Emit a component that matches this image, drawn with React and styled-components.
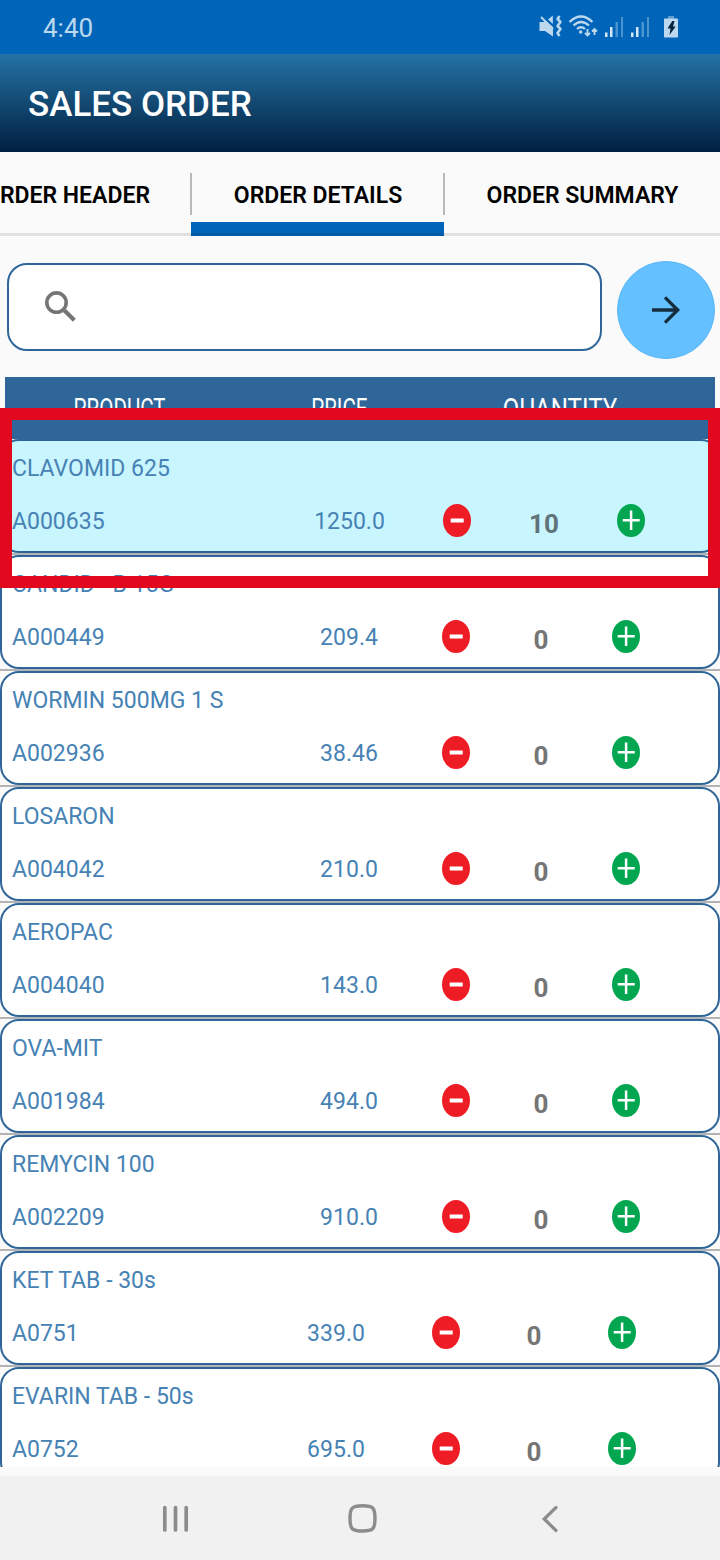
import React from "react";
import styled, { createGlobalStyle } from "styled-components";

const GlobalStyle = createGlobalStyle`
  * { box-sizing: border-box; }
  body { margin: 0; background: #fafafa; font-family: Roboto, "Liberation Sans", sans-serif; }
  svg { display: block; flex: none; }
`;

const Screen = styled.main`
  width: 720px;
  height: 1560px;
  display: flex;
  flex-direction: column;
  overflow: hidden;
  background: #fafafa;
`;

const StatusBar = styled.div`
  flex: none;
  height: 54px;
  padding: 2px 0 0 43px;
  display: flex;
  align-items: center;
  justify-content: space-between;
  background: #0065b8;
  color: #bcd8ee;
  font-size: 26px;
`;

const AppBar = styled.header`
  flex: none;
  height: 98px;
  padding: 2px 28px 0;
  display: flex;
  align-items: center;
  background: linear-gradient(#2573a5, #001f40);
`;

const Title = styled.h1`
  margin: 0;
  color: #fff;
  font-size: 35px;
  font-weight: 500;
  white-space: nowrap;
`;

const Tabs = styled.nav`
  flex: none;
  height: 84px;
  display: flex;
  overflow: hidden;
  background: linear-gradient(#e0e0e0, #e0e0e0) bottom / 100% 3px no-repeat;
`;

const Tab = styled.button`
  width: ${(p) => p.$width}px;
  flex: none;
  padding: 2px 41px 0 42px;
  border: 0;
  display: flex;
  align-items: center;
  justify-content: ${(p) => p.$align || "center"};
  background: ${(p) =>
    p.$active
      ? "linear-gradient(#005aa6, #005aa6) bottom / 100% 3px no-repeat, linear-gradient(#0065b8, #0065b8) bottom / 100% 14px no-repeat"
      : "none"};
  color: #000;
  font: 600 23px Roboto, sans-serif;
  white-space: nowrap;
`;

const TabDivider = styled.span`
  flex: none;
  width: 2px;
  height: 42px;
  margin: 21px -1px 0;
  background: #b9b9b9;
`;

const SearchRow = styled.div`
  flex: none;
  height: 141px;
  padding: 25px 5px 18px 7px;
  display: flex;
  align-items: center;
  gap: 15px;
`;

const SearchBox = styled.div`
  width: 595px;
  height: 88px;
  margin-top: -6px;
  padding: 0 35px 0;
  display: flex;
  align-items: center;
  border: 2px solid #2f6699;
  border-radius: 20px;
  background: #fff;
`;

const NextButton = styled.button`
  width: 98px;
  height: 98px;
  flex: none;
  padding: 0;
  border: 1px solid #58b7f8;
  border-radius: 50%;
  display: flex;
  align-items: center;
  justify-content: center;
  background: #64c0ff;
`;

const TableArea = styled.section`
  position: relative;
  flex: none;
  height: 1090px;
  overflow: hidden;
`;

const TableHead = styled.div`
  height: 62px;
  margin: 0 5px;
  padding-top: 2px;
  display: grid;
  grid-template-columns: 229px 211px 1fr;
  align-items: center;
  justify-items: center;
  background: #2f6699;
  color: #fff;
`;

const HeadLabel = styled.span`
  font-size: ${(p) => p.$size}px;
  margin-left: ${(p) => p.$shift || 0}px;
  line-height: 22px;
  overflow: hidden;
  transform: scaleX(${(p) => p.$squeeze});
  white-space: nowrap;
`;

const Item = styled.article`
  height: 114px;
  padding: 0 0 0 10px;
  border: 2px solid #2f6699;
  border-radius: 19px;
  background: ${(p) => (p.$selected ? "#c9f5ff" : "#fff")};
`;

const ItemSlot = styled.div`
  height: 116px;
  background: linear-gradient(#b3b3b3, #b3b3b3) bottom / 100% 2px no-repeat;
`;

const ItemName = styled.div`
  height: 54px;
  padding-top: 1px;
  line-height: 54px;
  color: #4682b4;
  font-size: 23px;
  white-space: pre;
`;

const ItemLine = styled.div`
  height: 52px;
  display: grid;
  grid-template-columns: ${(p) => p.$columns};
  align-items: center;
`;

const Code = styled.span`
  color: #4682b4;
  font-size: 23px;
`;

const Price = styled.span`
  color: #4682b4;
  font-size: 23px;
  text-align: center;
`;

const Quantity = styled.strong`
  padding-top: 5px;
  color: ${(p) => (p.$selected ? "#5f7378" : "#757575")};
  font-size: 26px;
  font-weight: 700;
  text-align: center;
`;

const RoundButton = styled.button`
  width: 28px;
  height: 33px;
  margin-bottom: 2px;
  padding: 0;
  border: 0;
  background: none;
`;

const Highlight = styled.div`
  position: absolute;
  top: 31px;
  left: 0;
  width: 720px;
  height: 180px;
  border: 12px solid #e2091e;
`;

const SystemNav = styled.footer`
  flex: none;
  height: 84px;
  margin-top: 9px;
  padding: 2px 0 0 162px;
  display: grid;
  grid-template-columns: 185px 194px 18px;
  align-items: center;
  background: #f1f1f1;
`;

const StatusIcons = () => (
  <svg width="182" height="30" viewBox="538 13 182 30" fill="#bcd8ee">
    <path d="M539.5 22h4l2.500-1 7 6v9.500L545 31h-5.500z" />
    <path d="M548 19.500l4.800-4v8.400z" />
    <path d="M541 17l12 12" stroke="#bcd8ee" strokeWidth="2" />
    <path d="M559.500 16l-2 3 3 3-3 4 3 3-3 4 2 3" fill="none" stroke="#bcd8ee" strokeWidth="2.500" strokeLinejoin="round" />
    <g fill="none" stroke="#bcd8ee" strokeWidth="2.200">
      <path d="M569.500 22q11.500-11 23 0" />
      <path d="M573.500 25.500q7.500-7 15.500 0" />
      <path d="M577 29q4-3.500 8 0" />
      <path d="M587.500 29v6M585 33l2.500 2.500L590 33M594.500 35v-6M592 31.500l2.500-2.500 2.500 2.500" strokeWidth="1.900" />
    </g>
    <circle cx="580.700" cy="32" r="1.700" />
    {[605, 631].map((x) => (
      <g key={x}>
        <path d={`M${x} 32.500h2.500V37H${x}zM${x + 5} 27h2.500v10h-2.500z`} fill="#d5e8f7" />
        <path d={`M${x + 10.5} 22h2.500v15h-2.500zM${x + 16} 17h2v20h-2z`} fill="#4a94cf" />
      </g>
    ))}
    <path d="M668 16h6v3h-6z" fill="#609fd2" />
    <rect x="664" y="18.500" width="14" height="19" rx=".7" />
    <path d="M672.300 21h2.200l-1.500 5.500h2.700L669.500 35l1-6.500h-3z" fill="#06233d" />
  </svg>
);

const SearchIcon = () => (
  <svg width="34" height="34" viewBox="44 290 34 34" fill="none" stroke="#757575">
    <circle cx="56.500" cy="302.600" r="9.700" strokeWidth="3.600" />
    <path d="M64.500 310.500l9.800 9.800" strokeWidth="4.200" />
  </svg>
);

const ArrowIcon = () => (
  <svg width="30" height="30" viewBox="0 0 30 30" fill="none" stroke="#152c3c" strokeWidth="3.300">
    <path d="M1 15h26M14 2.300L26.700 15 14 27.700" />
  </svg>
);

const MinusIcon = () => (
  <svg width="28" height="33" viewBox="0 0 28 33">
    <ellipse cx="14" cy="16.500" rx="14" ry="16.500" fill="#ee1c25" />
    <rect x="7.700" y="14.500" width="13" height="4" fill="#fff" />
  </svg>
);

const PlusIcon = () => (
  <svg width="28" height="33" viewBox="0 0 28 33">
    <ellipse cx="14" cy="16.500" rx="14" ry="16.500" fill="#02a651" />
    <path d="M5.700 16.300h17M14.100 6.500v19.500" stroke="#fff" strokeWidth="2.500" />
  </svg>
);

const RecentsIcon = () => (
  <svg width="27" height="28" viewBox="0 0 27 28" stroke="#8c8c8c" strokeWidth="3.700" strokeLinecap="round">
    <path d="M2.800 2.500v22.500M13.500 2.500v22.500M24.200 2.500v22.500" />
  </svg>
);

const HomeIcon = () => (
  <svg width="30" height="30" viewBox="0 0 30 30" fill="none" stroke="#8c8c8c" strokeWidth="3.400">
    <path d="M15.500 1.700c10.500 0 12.500 2 12.500 12.800S26 27 15.500 27 3 25 3 14.500 5 1.700 15.500 1.700z" />
  </svg>
);

const BackIcon = () => (
  <svg width="18" height="28" viewBox="0 0 18 28" fill="none" stroke="#8c8c8c" strokeWidth="3.200" strokeLinecap="round">
    <path d="M15 2.500L3.200 14 15 25.500" />
  </svg>
);

/* code, price, gap, minus, quantity, plus */
const SELECTED = "268px 139px 24px 28px 146px 28px";
const REGULAR = "268px 138px 24px 28px 142px 28px";
const SHORT = "268px 112px 40px 28px 148px 28px";

const items = [
  { name: "CLAVOMID 625", code: "A000635", price: "1250.0", qty: 10, columns: SELECTED, selected: true },
  { name: "CANDID - B 15G", code: "A000449", price: "209.4", qty: 0, columns: REGULAR },
  { name: "WORMIN 500MG 1 S", code: "A002936", price: "38.46", qty: 0, columns: REGULAR },
  { name: "LOSARON", code: "A004042", price: "210.0", qty: 0, columns: REGULAR },
  { name: "AEROPAC", code: "A004040", price: "143.0", qty: 0, columns: REGULAR },
  { name: "OVA-MIT", code: "A001984", price: "494.0", qty: 0, columns: REGULAR },
  { name: "REMYCIN 100", code: "A002209", price: "910.0", qty: 0, columns: REGULAR },
  { name: "KET TAB - 30s", code: "A0751", price: "339.0", qty: 0, columns: SHORT },
  { name: "EVARIN TAB - 50s", code: "A0752", price: "695.0", qty: 0, columns: SHORT },
];

function ProductItem({ item }) {
  return (
    <ItemSlot>
      <Item $selected={item.selected}>
        <ItemName>{item.name}</ItemName>
        <ItemLine $columns={item.columns}>
          <Code>{item.code}</Code>
          <Price>{item.price}</Price>
          <span />
          <RoundButton aria-label="Decrease"><MinusIcon /></RoundButton>
          <Quantity $selected={item.selected}>{item.qty}</Quantity>
          <RoundButton aria-label="Increase"><PlusIcon /></RoundButton>
        </ItemLine>
      </Item>
    </ItemSlot>
  );
}

export default function App() {
  return (
    <Screen>
      <GlobalStyle />
      <StatusBar>
        <span>4:40</span>
        <StatusIcons />
      </StatusBar>
      <AppBar>
        <Title>SALES ORDER</Title>
      </AppBar>
      <Tabs>
        <Tab $width={191} $align="flex-end">ORDER HEADER</Tab>
        <TabDivider />
        <Tab $width={253} $active>ORDER DETAILS</Tab>
        <TabDivider />
        <Tab $width={276}>ORDER SUMMARY</Tab>
      </Tabs>
      <SearchRow>
        <SearchBox><SearchIcon /></SearchBox>
        <NextButton aria-label="Next"><ArrowIcon /></NextButton>
      </SearchRow>
      <TableArea>
        <TableHead>
          <HeadLabel $size={28} $squeeze={0.735}>PRODUCT</HeadLabel>
          <HeadLabel $size={28} $squeeze={0.735}>PRICE</HeadLabel>
          <HeadLabel $size={30} $squeeze={0.805} $shift={-40}>QUANTITY</HeadLabel>
        </TableHead>
        {items.map((item) => (
          <ProductItem key={item.code} item={item} />
        ))}
        <Highlight />
      </TableArea>
      <SystemNav>
        <RecentsIcon />
        <HomeIcon />
        <BackIcon />
      </SystemNav>
    </Screen>
  );
}
